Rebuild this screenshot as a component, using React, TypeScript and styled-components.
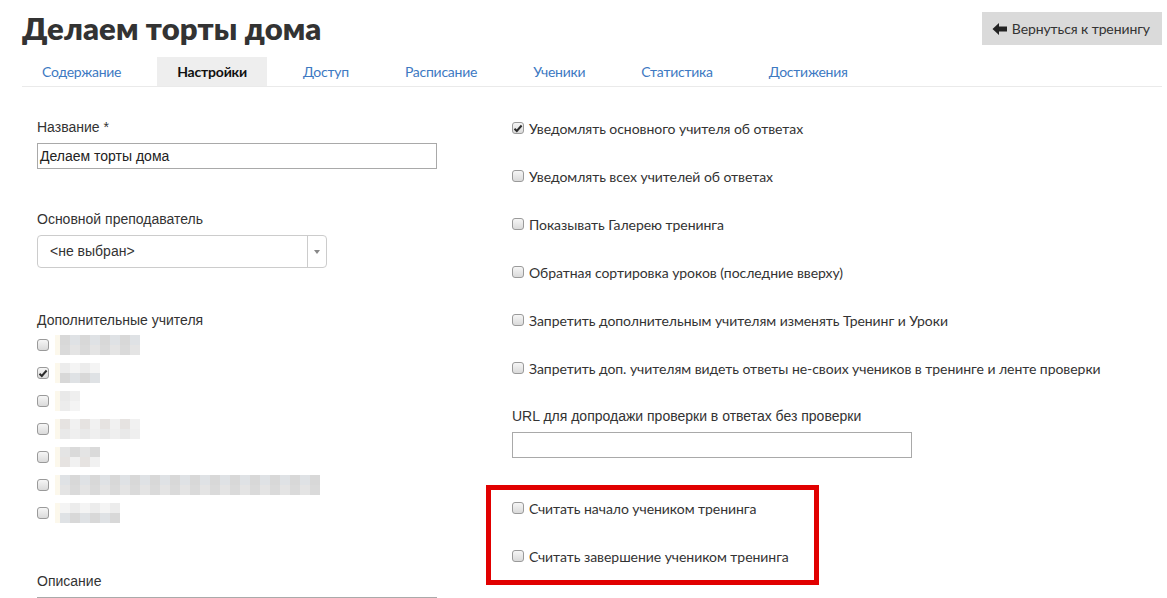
import { FC } from 'react';
import styled, { createGlobalStyle } from 'styled-components';

const Global = createGlobalStyle`
    body {
        margin: 0;
        background: #fff;
        font-family: Lato, "Open Sans", sans-serif;
        color: #333;
    }
`;

const Page = styled.div`
    padding: 0 5px 0 22px;
    overflow: hidden;
`;

const Header = styled.div`
    display: flex;
    justify-content: space-between;
    align-items: flex-start;
    height: 57px;
`;

const Title = styled.h1`
    margin: 9px 0 0;
    font-size: 31px;
    line-height: 38px;
    font-weight: 800;
    color: #333;
    letter-spacing: 0.1px;
`;

const BackButton = styled.button`
    margin-top: 12px;
    height: 33px;
    padding: 0 12px 0 10px;
    border: none;
    background: #dadada;
    color: #333;
    font-family: Lato, sans-serif;
    font-size: 14px;
    letter-spacing: -0.1px;
    display: flex;
    align-items: center;
    gap: 4px;
    cursor: pointer;
`;

const Tabs = styled.div`
    display: flex;
    gap: 16px;
    border-bottom: 1px solid #eaeaea;
`;

const Tab = styled.div<{ $active?: boolean }>`
    padding: 0 20px;
    height: 29px;
    line-height: 29px;
    font-size: 14px;
    letter-spacing: ${p => (p.$active ? '-0.2px' : '-0.25px')};
    color: ${p => (p.$active ? '#111' : '#3d79c2')};
    font-weight: ${p => (p.$active ? 700 : 400)};
    background: ${p => (p.$active ? '#eeeeee' : 'transparent')};
`;

const Columns = styled.div`
    display: grid;
    grid-template-columns: 475px 475px;
    padding: 0 15px;
`;

const LeftCol = styled.div`
    padding-top: 30px;
`;

const RightCol = styled.div`
    padding-top: 31px;
    white-space: nowrap;
`;

const Field = styled.div<{ $gap: number }>`
    margin-bottom: ${p => p.$gap}px;
`;

const Label = styled.div<{ $tight?: boolean }>`
    font-family: "Liberation Sans", Arial, sans-serif;
    font-size: 14px;
    line-height: 20px;
    color: #333;
    margin-bottom: ${p => (p.$tight ? 1 : 6)}px;
`;

const TextInput = styled.div<{ $width: number }>`
    box-sizing: border-box;
    width: ${p => p.$width}px;
    height: 26px;
    border: 1px solid #a9a9a9;
    padding: 0 2px;
    font-family: "Liberation Sans", Arial, sans-serif;
    font-size: 14px;
    line-height: 24px;
    color: #222;
`;

const Select = styled.div`
    box-sizing: border-box;
    width: 290px;
    height: 33px;
    border: 1px solid #ccc;
    border-radius: 4px;
    display: flex;
    font-family: "Liberation Sans", Arial, sans-serif;
    font-size: 14px;
    color: #333;
`;

const SelectValue = styled.div`
    flex: 1;
    padding-left: 12px;
    line-height: 31px;
`;

const SelectArrow = styled.div`
    width: 18px;
    border-left: 1px solid #ccc;
    display: flex;
    align-items: center;
    justify-content: center;
    &::after {
        content: '';
        border-left: 3px solid transparent;
        border-right: 3px solid transparent;
        border-top: 4px solid #888;
    }
`;

const Box = styled.span`
    box-sizing: border-box;
    flex-shrink: 0;
    width: 12px;
    height: 12px;
    border: 1px solid #9a9a9a;
    border-radius: 3px;
    background: linear-gradient(#f6f6f6, #dadada);
    display: flex;
    align-items: center;
    justify-content: center;
`;

const CheckRow = styled.div<{ $gap: number }>`
    display: flex;
    align-items: center;
    gap: 5px;
    height: 20px;
    margin-bottom: ${p => p.$gap}px;
    font-size: 14px;
    letter-spacing: -0.05px;
    color: #333;
`;

const TeacherRow = styled.div`
    display: flex;
    align-items: center;
    gap: 6px;
    height: 28px;
`;

const Blur = styled.div`
    display: grid;
    grid-auto-flow: column;
    grid-template-rows: 10px 10px;
    grid-template-columns: 5px;
    grid-auto-columns: 10px;
`;

const Cell = styled.span<{ $c: string }>`
    background: ${p => p.$c};
`;

const RedFrame = styled.div`
    box-sizing: border-box;
    width: 333px;
    margin-left: -26px;
    border: 5px solid #e10000;
    padding: 8px 0 14px 21px;
`;

const Underline = styled.div`
    width: 400px;
    border-top: 1px solid #aaa;
`;

const Check: FC<{ checked?: boolean }> = ({ checked }) => (
    <Box>
        {checked && (
            <svg width="10" height="9" viewBox="0 0 10 9">
                <path d="M1.5 4.8 L3.8 7 L8.6 1.5" fill="none" stroke="#2b2b2b" strokeWidth="2" />
            </svg>
        )}
    </Box>
);

const shades = ['#e4e4e4', '#ececec', '#f1f1f1', '#dfe2e5', '#e9e9e9', '#dadada', '#f4f4f4', '#e6e3e1', '#d8d8d8', '#efefef'];

const BlurName: FC<{ cols: number; seed: number }> = ({ cols, seed }) => {
    const cells = [];
    for (let i = 0; i < cols * 2; i++) {
        const c = i < 2 ? '#fcf8ec' : shades[(i * 7 + seed * 3 + (i >> 1)) % shades.length];
        cells.push(<Cell key={i} $c={c} />);
    }
    return <Blur>{cells}</Blur>;
};

const teachers = [
    { cols: 9, seed: 1 },
    { cols: 5, seed: 2, checked: true },
    { cols: 3, seed: 3 },
    { cols: 9, seed: 4 },
    { cols: 5, seed: 5 },
    { cols: 27, seed: 6 },
    { cols: 7, seed: 7 },
];

const tabs = ['Содержание', 'Настройки', 'Доступ', 'Расписание', 'Ученики', 'Статистика', 'Достижения'];

const options = [
    { text: 'Уведомлять основного учителя об ответах', checked: true },
    { text: 'Уведомлять всех учителей об ответах' },
    { text: 'Показывать Галерею тренинга' },
    { text: 'Обратная сортировка уроков (последние вверху)' },
    { text: 'Запретить дополнительным учителям изменять Тренинг и Уроки' },
    { text: 'Запретить доп. учителям видеть ответы не-своих учеников в тренинге и ленте проверки' },
];

export default function App() {
    return (
        <Page>
            <Global />
            <Header>
                <Title>Делаем торты дома</Title>
                <BackButton>
                    <svg width="16" height="14" viewBox="0 0 16 14">
                        <path d="M0.5 7 L7 1 L7 4.5 L15 4.5 L15 9.5 L7 9.5 L7 13 Z" fill="#222" />
                    </svg>
                    Вернуться к тренингу
                </BackButton>
            </Header>
            <Tabs>
                {tabs.map(t => (
                    <Tab key={t} $active={t === 'Настройки'}>
                        {t}
                    </Tab>
                ))}
            </Tabs>
            <Columns>
                <LeftCol>
                    <Field $gap={40}>
                        <Label>Название *</Label>
                        <TextInput $width={400}>Делаем торты дома</TextInput>
                    </Field>
                    <Field $gap={42}>
                        <Label>Основной преподаватель</Label>
                        <Select>
                            <SelectValue>&lt;не выбран&gt;</SelectValue>
                            <SelectArrow />
                        </Select>
                    </Field>
                    <Field $gap={44}>
                        <Label $tight>Дополнительные учителя</Label>
                        {teachers.map((t, i) => (
                            <TeacherRow key={i}>
                                <Check checked={t.checked} />
                                <BlurName cols={t.cols} seed={t.seed} />
                            </TeacherRow>
                        ))}
                    </Field>
                    <Field $gap={0}>
                        <Label>Описание</Label>
                        <Underline />
                    </Field>
                </LeftCol>
                <RightCol>
                    {options.map(o => (
                        <CheckRow key={o.text} $gap={28}>
                            <Check checked={o.checked} />
                            {o.text}
                        </CheckRow>
                    ))}
                    <Field $gap={27}>
                        <Label>URL для допродажи проверки в ответах без проверки</Label>
                        <TextInput $width={400} />
                    </Field>
                    <RedFrame>
                        <CheckRow $gap={28}>
                            <Check />
                            Считать начало учеником тренинга
                        </CheckRow>
                        <CheckRow $gap={0}>
                            <Check />
                            Считать завершение учеником тренинга
                        </CheckRow>
                    </RedFrame>
                </RightCol>
            </Columns>
        </Page>
    );
}
